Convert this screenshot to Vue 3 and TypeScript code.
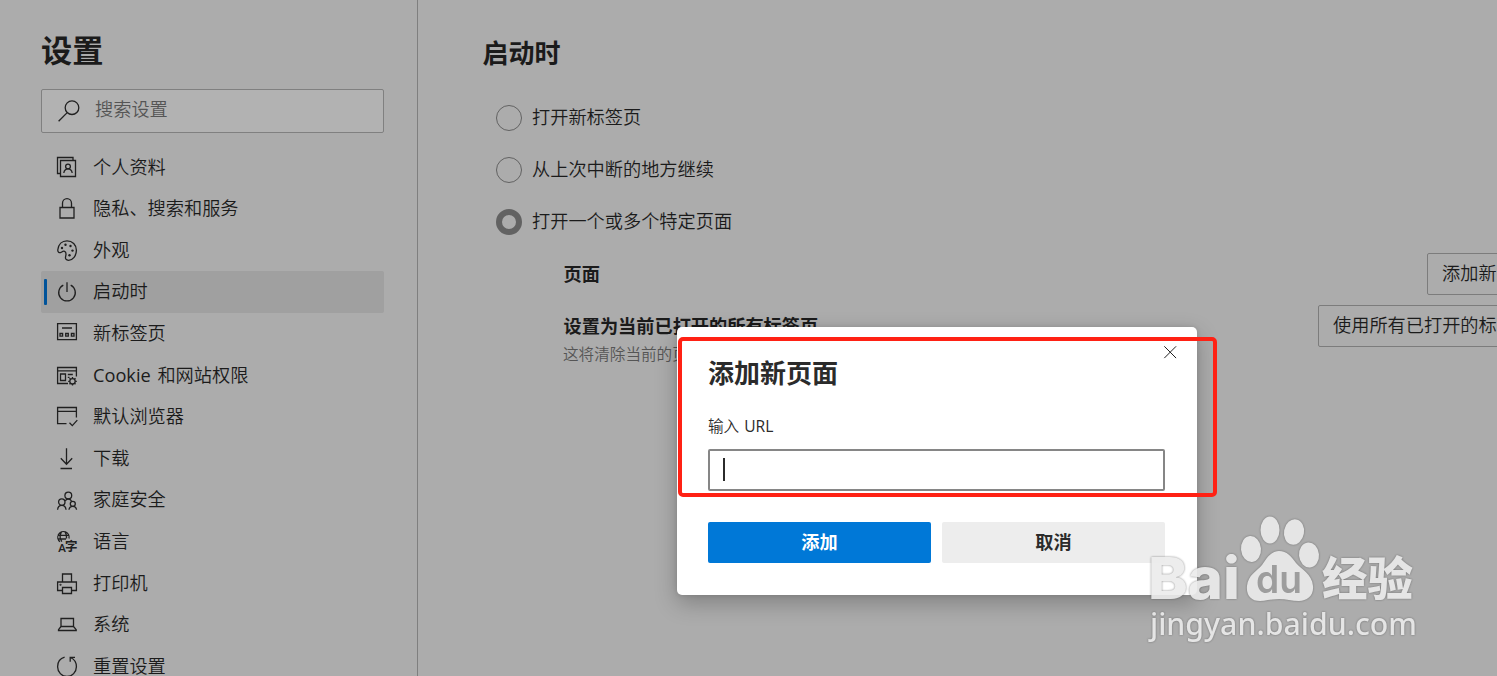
<script setup lang="ts">
import { ref, onMounted } from "vue"

interface NavItem {
  icon: string
  label: string
  word?: string
}

const navItems: NavItem[] = [
  { icon: "profile", label: "个人资料" },
  { icon: "lock", label: "隐私、搜索和服务" },
  { icon: "palette", label: "外观" },
  { icon: "power", label: "启动时" },
  { icon: "newtab", label: "新标签页" },
  { icon: "cookie", word: "Cookie ", label: "和网站权限" },
  { icon: "browser", label: "默认浏览器" },
  { icon: "download", label: "下载" },
  { icon: "family", label: "家庭安全" },
  { icon: "language", label: "语言" },
  { icon: "printer", label: "打印机" },
  { icon: "system", label: "系统" },
  { icon: "reset", label: "重置设置" }
]

const startupOptions = ["打开新标签页", "从上次中断的地方继续", "打开一个或多个特定页面"]

const active = ref("power")
const startup = ref(2)
const url = ref("")
const dialogOpen = ref(true)
const urlFocused = ref(true)

const closeDialog = () => {
  dialogOpen.value = false
  url.value = ""
}

onMounted(() => {
  document.title = "设置"
})
</script>

<template>
  <div class="page">
    <aside class="sidebar">
      <h1>设置</h1>
      <div class="search">
        <svg width="22" height="22" viewBox="0 0 22 22">
          <circle cx="14" cy="7.7" r="6.8" />
          <path d="M9.2 12.6L.6 21.2" />
        </svg>
        <input placeholder="搜索设置" />
      </div>

      <nav>
        <a v-for="item in navItems" :key="item.icon" :class="{ active: active === item.icon }" @click="active = item.icon">
          <svg width="20" height="21" viewBox="0 0 20 21">
            <template v-if="item.icon === 'profile'">
              <path d="M3.5 16.5H.5V.5h15.500v3M3.500 3.500h15v16h-15z" />
              <circle cx="11" cy="9.500" r="2.400" />
              <path d="M6.800 16c.4-2.600 1.800-4.100 4.200-4.100s3.800 1.500 4.200 4.100" />
            </template>
            <template v-else-if="item.icon === 'lock'">
              <path d="M3 9.500h14v10.500H3zM5.500 9.500V5.200a4.500 4.500 0 0 1 9 0v4.300" />
            </template>
            <template v-else-if="item.icon === 'palette'">
              <path d="M.8 9.800C1.400 4.200 5 .8 10 .8c5.400 0 9.400 4 9.400 9.400 0 5.600-3.600 10.100-7.900 10.100-2.500 0-3.400-1.600-2.900-3.700.7-2.700.7-4.500-.9-5.200-1.400-.7-2.200.1-3.500.9C2.500 13.300.5 12.300.8 9.800z" />
              <g class="solid">
                <circle cx="5" cy="8" r="1.200" />
                <circle cx="8.500" cy="4.800" r="1.200" />
                <circle cx="13.500" cy="6" r="1.200" />
                <circle cx="15.500" cy="10.600" r="1.200" />
                <circle cx="12.500" cy="15.200" r="1.200" />
              </g>
            </template>
            <template v-else-if="item.icon === 'power'">
              <path d="M6.300 4.200a8.300 8.300 0 1 0 7.400 0M10 1.200v9.800" />
            </template>
            <template v-else-if="item.icon === 'newtab'">
              <path d="M.6.600h18.800v16H.6zM5 5h10M3 10.500h2.600v2.600H3zM8.700 10.500h2.600v2.600H8.700zM14.400 10.500H17v2.600h-2.600z" />
            </template>
            <template v-else-if="item.icon === 'cookie'">
              <path d="M11 18.500H.6v-16h18.800v9M.6 5.800h18.800M3.500 9h5v6.500h-5zM10.800 9.500h5M10.800 12.300h1.700" />
              <circle cx="15.500" cy="16.300" r="2.700" />
              <path d="M15.500 12v1.500M15.500 19.100v1.500M11.200 16.300h1.500M18.300 16.300h1.500M12.500 13.300l1 1M17.500 18.300l1 1M12.500 19.300l1-1M17.500 14.300l1-1" />
            </template>
            <template v-else-if="item.icon === 'browser'">
              <path d="M9.500 17.600H.6V1.500h18.800v10M.6 5.300h18.800M12.500 16.800l2.800 2.800 5-5.500" />
            </template>
            <template v-else-if="item.icon === 'download'">
              <path d="M9.500.2v16M3.800 10.300l5.700 5.900 5.700-5.900M3.500 20.500h11.500" />
            </template>
            <template v-else-if="item.icon === 'family'">
              <circle cx="11.300" cy="6.500" r="3.400" />
              <circle cx="4.800" cy="13.100" r="3.200" />
              <circle cx="15.800" cy="14.800" r="2.500" />
              <path d="M.6 20.800c.2-3 1.700-4.500 4.200-4.500s4 1.500 4.200 4.500M12 20.800c.2-2.300 1.600-3.500 3.800-3.500s3.500 1.200 3.700 3.500M8.300 11.800c.7-1.200 1.700-1.800 3-1.800 1.500 0 2.700.8 3.300 2.200" />
            </template>
            <template v-else-if="item.icon === 'language'">
              <path d="M3 10.800A5.700 5.700 0 1 1 12 7.500M.6 4.300h11M.6 8H9M4.500.8c-1.800 3-1.500 7 .3 9.800M8 .8c1.400 2 1.800 4.300 1.500 6.700" />
              <text x="1.200" y="21" class="latin">A</text>
              <text x="8" y="19.600" class="han">字</text>
            </template>
            <template v-else-if="item.icon === 'printer'">
              <path d="M5.500 9V1h9v8M5.500 17.500H.6V9h18.800v8.500h-4.900M5.500 14.500h9v6h-9z" />
              <circle cx="3.500" cy="11.800" r=".4" />
            </template>
            <template v-else-if="item.icon === 'system'">
              <path d="M4 4.500h12.500v8H4zM4 12.500l-2.500 3.200v.8h17.700v-.8l-2.700-3.200" />
            </template>
            <template v-else>
              <path d="M7.600 1.200C3.200 2.400.6 6.400.6 10.800c0 5.300 4.200 9.700 9.400 9.700s9.400-4.400 9.400-9.700c0-4.200-2.500-7.900-6.200-9.300M18 1.300h-4.800v4.500" />
            </template>
          </svg>
          <span><span v-if="item.word" class="word">{{ item.word }}</span>{{ item.label }}</span>
        </a>
      </nav>
    </aside>

    <main>
      <h2>启动时</h2>
      <div class="options">
        <label v-for="(option, index) in startupOptions" :key="option" @click="startup = index">
          <i class="radio" :class="{ checked: startup === index }"></i>
          <span>{{ option }}</span>
        </label>
      </div>

      <div class="row">
        <strong>页面</strong>
        <button class="outline add-page">添加新页面</button>
      </div>
      <div class="row">
        <strong>设置为当前已打开的所有标签页</strong>
        <button class="outline use-all">使用所有已打开的标签页</button>
      </div>
      <p class="hint">这将清除当前的页面列表</p>
    </main>

    <div v-if="dialogOpen" class="dialog">
      <svg class="close" width="14" height="14" viewBox="0 0 14 14" @click="closeDialog">
        <path d="M1.300 1.300l11.800 11.800M13.100 1.300L1.300 13.100" />
      </svg>
      <h2>添加新页面</h2>
      <label for="url">输入 <span class="word">URL</span></label>
      <div class="field">
        <i v-if="urlFocused && !url" class="caret"></i>
        <input id="url" v-model="url" />
      </div>
      <div class="actions">
        <button class="primary" @click="closeDialog">添加</button>
        <button class="secondary" @click="closeDialog">取消</button>
      </div>
    </div>

    <div class="marker"></div>

    <svg class="watermark" width="280" height="135" viewBox="0 0 280 135">
      <text class="brand" x="3" y="83" textLength="92" lengthAdjust="spacingAndGlyphs">Bai</text>
      <ellipse cx="106" cy="33" rx="10" ry="13" transform="rotate(-5 106 33)" />
      <ellipse cx="125" cy="14" rx="9.500" ry="13.500" />
      <ellipse cx="149" cy="16" rx="10" ry="12.800" transform="rotate(10 149 16)" />
      <ellipse cx="164" cy="39" rx="10" ry="12.500" transform="rotate(-5 164 39)" />
      <path d="M134 35c8 0 12 5 17 12 5 6 16 11 17 23 1 10-6 15-14 15-7 0-13-2-20-2s-13 2-19 2c-9 0-14-6-13-15 1-11 10-15 15-21 5-7 9-14 17-14z" />
      <text class="du" x="111" y="76.500" textLength="46" lengthAdjust="spacingAndGlyphs">du</text>
      <text class="jingyan" x="177" y="79" textLength="91" lengthAdjust="spacingAndGlyphs">经验</text>
      <text class="site" x="5" y="119" textLength="267" lengthAdjust="spacingAndGlyphs">jingyan.baidu.com</text>
    </svg>
  </div>
</template>

<style>
body {
  background: #acacac;
  overflow: hidden;
}
</style>

<style scoped>
* {
  box-sizing: border-box;
}

.page {
  position: relative;
  display: flex;
  width: 100vw;
  height: 100vh;
  overflow: hidden;
  background: #acacac;
  color: #1b1b1b;
  font: 350 18.2px/26px "Open Sans", "Noto Sans CJK SC", sans-serif;
}

h1,
h2,
p {
  margin: 0;
}

button,
input {
  font: inherit;
  color: inherit;
}

svg {
  display: block;
  flex: none;
  overflow: visible;
  fill: none;
  stroke: #202020;
  stroke-width: 1.3;
}

.word {
  font-weight: 400;
  white-space: pre;
}

.sidebar {
  flex: none;
  width: 418px;
  padding: 30px 33px 0 41px;
  border-right: 1px solid #7f7f7f;
}

.sidebar h1 {
  font-size: 31.2px;
  font-weight: 700;
  line-height: 40px;
}

.search {
  display: flex;
  align-items: center;
  height: 44px;
  margin-top: 19px;
  padding-left: 16px;
  border: 1px solid #808080;
  border-radius: 2px;
  background: #b2b2b2;
}

.search input {
  width: 260px;
  margin-left: 15px;
  padding: 0 0 4px;
  border: 0;
  outline: 0;
  background: none;
}

.search input::placeholder {
  color: #555;
  opacity: 1;
}

nav {
  margin-top: 13.3px;
}

nav a {
  position: relative;
  display: flex;
  align-items: center;
  gap: 16px;
  height: 41.6px;
  padding-left: 16px;
  border-radius: 2px;
}

nav a > span {
  padding-bottom: 1px;
  word-spacing: 2px;
}

nav a.active {
  background: #a0a0a0;
}

nav a.active::before {
  content: "";
  position: absolute;
  left: 3px;
  top: 8px;
  width: 3px;
  height: 26px;
  border-radius: 1px;
  background: #00539a;
}

.solid {
  fill: #202020;
  stroke: none;
}

.latin,
.han {
  fill: #202020;
  stroke: none;
  font-weight: 600;
}

.latin {
  font-size: 11.5px;
}

.han {
  font-size: 12.5px;
}

main {
  flex: 1;
  min-width: 0;
  padding-top: 36px;
}

main h2 {
  margin-left: 64.5px;
  font-size: 26px;
  font-weight: 700;
  line-height: 34px;
}

.options {
  margin: 22px 0 0 78px;
}

.options label {
  display: flex;
  align-items: center;
  gap: 10px;
  height: 52px;
}

.options span {
  padding-bottom: 2px;
}

.radio {
  width: 26px;
  height: 26px;
  border: 1px solid #626262;
  border-radius: 50%;
}

.radio.checked {
  border-width: 6px;
}

.row {
  display: flex;
  align-items: center;
  justify-content: space-between;
  height: 52px;
  margin-left: 145.5px;
  white-space: nowrap;
}

.row strong {
  padding-bottom: 1px;
  font-weight: 700;
}

.outline {
  flex: none;
  height: 42px;
  padding: 0 14px 2px;
  border: 1px solid #7c7c7c;
  border-radius: 2px;
  background: none;
  text-align: left;
}

.add-page {
  width: 121px;
  margin-right: -51px;
}

.use-all {
  width: 230px;
  margin-right: -51px;
}

.hint {
  margin: -11px 0 0 145px;
  color: #555;
  font-size: 15.6px;
}

.dialog {
  position: absolute;
  left: 677px;
  top: 327px;
  width: 520px;
  height: 268px;
  padding: 29px 32px 0 31px;
  border-radius: 5px;
  background: #fff;
  color: #2b2b2b;
  box-shadow: 0 8px 22px rgba(0, 0, 0, 0.25), 0 0 5px rgba(0, 0, 0, 0.12);
}

.dialog h2 {
  font-size: 26px;
  font-weight: 700;
  line-height: 34px;
}

.dialog label {
  display: block;
  margin-top: 23px;
  font-size: 15.6px;
  word-spacing: 1px;
}

.close {
  position: absolute;
  right: 20px;
  top: 18px;
  stroke-width: 1;
}

.field {
  display: flex;
  align-items: center;
  height: 42px;
  margin-top: 10px;
  padding-left: 13px;
  border: 2px solid #868686;
  border-radius: 2px;
}

.field input {
  flex: 1;
  border: 0;
  outline: 0;
  background: none;
}

.caret {
  width: 2px;
  height: 23px;
  margin-bottom: 1px;
  background: #2b2b2b;
}

.actions {
  display: flex;
  gap: 11px;
  margin-top: 31px;
}

.actions button {
  flex: 1;
  height: 41px;
  padding: 0 0 1px;
  border: 0;
  border-radius: 2px;
  font-weight: 700;
}

.primary {
  background: #0078d7;
  color: #fff;
}

.secondary {
  background: #ededed;
}

.marker {
  position: absolute;
  left: 678px;
  top: 337px;
  width: 539px;
  height: 160px;
  border: 4px solid #ff2114;
  border-radius: 5px;
  pointer-events: none;
}

.watermark {
  position: absolute;
  left: 1145px;
  top: 516px;
  fill: #ececec;
  stroke: none;
  opacity: 0.9;
  filter: drop-shadow(0 0 1px rgba(80, 80, 80, 0.7));
  pointer-events: none;
}

.brand {
  font: 800 58px Inter, sans-serif;
}

.du {
  fill: #9c9c9c;
  font: 600 38px Inter, sans-serif;
}

.jingyan {
  font: 900 46px "Noto Sans CJK SC", sans-serif;
}

.site {
  font: 500 31px "Noto Sans", sans-serif;
}
</style>
